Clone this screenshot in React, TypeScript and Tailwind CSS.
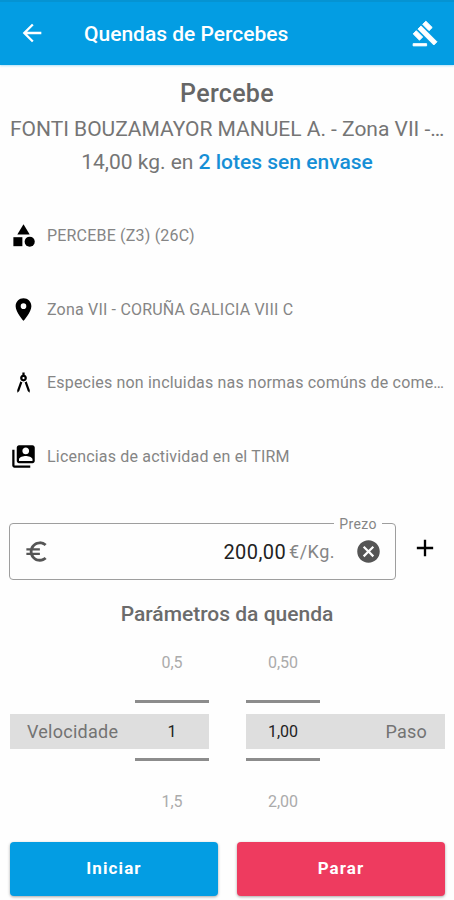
import type { ReactNode } from 'react';
import {
  MdAdd,
  MdArchitecture,
  MdArrowBack,
  MdCancel,
  MdCategory,
  MdEuroSymbol,
  MdPlace,
  MdSwitchAccount,
} from 'react-icons/md';

function GavelIcon() {
  return (
    <svg className="h-[27px] w-[27px]" viewBox="0 0 24 24" fill="currentColor" stroke="currentColor" strokeWidth={0.8}>
      <path d="M1 21h12v2H1z" />
      <path d="M5.245 8.07l2.83-2.827 14.14 14.142-2.828 2.828z" />
      <path d="M12.317 1l5.657 5.656-2.83 2.83-5.654-5.66z" />
      <path d="M3.825 9.485l5.657 5.657-2.828 2.828-5.657-5.657z" />
    </svg>
  );
}

interface InfoRowProps {
  icon: ReactNode;
  text: string;
}

function InfoRow({ icon, text }: InfoRowProps) {
  return (
    <li className="flex h-[73.8px] items-center">
      <span className="flex w-[37px] flex-shrink-0 text-black">{icon}</span>
      <span className="pt-px text-[16px] tracking-[0.19px] whitespace-nowrap text-[#858585]">{text}</span>
    </li>
  );
}

interface StepPickerProps {
  label: string;
  values: [string, string, string];
  reverse?: boolean;
}

function StepPicker({ label, values, reverse }: StepPickerProps) {
  const [prev, current, next] = values;

  return (
    <div className={`flex w-[199px] flex-col ${reverse ? 'items-start' : 'items-end'}`}>
      <div className="flex h-[60px] w-[74px] justify-center pt-3 text-[16px] leading-[22px] text-[#ababab]">{prev}</div>
      <div className="h-[3px] w-[74px] bg-[#8c8c8c]" />
      <div className={`mt-[11px] mb-[9px] flex h-[35px] w-full items-center bg-[#dedede] ${reverse ? 'flex-row-reverse' : ''}`}>
        <span className={`flex-1 text-[18px] tracking-[0.25px] text-[#737373] ${reverse ? 'pr-[18px] text-right' : 'pl-[17px]'}`}>
          {label}
        </span>
        <span className="w-[74px] pt-px text-center text-[16px] text-[#222222]">{current}</span>
      </div>
      <div className="h-[3px] w-[74px] bg-[#8c8c8c]" />
      <div className="flex h-[81px] w-[74px] justify-center pt-[30px] text-[16px] leading-[22px] text-[#ababab]">{next}</div>
    </div>
  );
}

export default function App() {
  return (
    <div className="flex h-[900px] w-[454px] flex-col overflow-hidden bg-[#fefefe] font-['Roboto',sans-serif]">
      <header className="flex h-[65px] flex-shrink-0 items-center border-t-2 border-[#0593d2] bg-[#039de3] pr-[15px] pl-[18px] text-white shadow-[0_1px_2px_rgba(3,157,227,0.3)]">
        <MdArrowBack className="-mt-[2px] h-7 w-7" />
        <h1 className="ml-[38px] flex-1 pt-[3px] text-[21px] font-medium">Quendas de Percebes</h1>
        <GavelIcon />
      </header>

      <section className="px-[10px] pt-[11px] text-center text-[21px] text-[#757575]">
        <h2 className="text-[25px] leading-[36px] font-medium tracking-[0.3px] text-[#666666]">Percebe</h2>
        <p className="pt-px leading-[33px] tracking-[-0.02px] whitespace-nowrap">FONTI BOUZAMAYOR MANUEL A. - Zona VII -…</p>
        <p className="leading-[32px]">
          14,00 kg. en <span className="font-medium text-[#168fd6]">2 lotes sen envase</span>
        </p>
      </section>

      <ul className="mt-[20.5px] px-[10px]">
        <InfoRow icon={<MdCategory className="h-[27px] w-[27px]" />} text="PERCEBE (Z3) (26C)" />
        <InfoRow icon={<MdPlace className="h-[27px] w-[27px]" />} text="Zona VII - CORUÑA GALICIA VIII C" />
        <InfoRow
          icon={<MdArchitecture className="h-[27px] w-[27px]" />}
          text="Especies non incluidas nas normas comúns de come…"
        />
        <InfoRow icon={<MdSwitchAccount className="h-[27px] w-[27px]" />} text="Licencias de actividad en el TIRM" />
      </ul>

      <div className="mt-[21.5px] flex h-[65px] items-start pl-[9px]">
        <fieldset className="h-[65px] w-[387px] rounded-[4px] border border-[#9e9e9e] pr-[13px] pl-[13px]">
          <legend className="ml-auto px-[5px] pt-px text-[14px] leading-4 tracking-[0.4px] text-[#858585]">Prezo</legend>
          <div className="flex h-[39px] items-center">
            <MdEuroSymbol className="h-[27px] w-[27px] text-[#555555]" />
            <span className="flex-1 text-right text-[20px] tracking-[0.4px] text-[#222222]">200,00</span>
            <span className="ml-[3px] text-[18px] tracking-[0.5px] text-[#858585]">€/Kg.</span>
            <MdCancel className="ml-5 h-[27px] w-[27px] text-[#555555]" />
          </div>
        </fieldset>
        <MdAdd className="mt-[19px] ml-[15px] h-[28px] w-[28px] text-black" />
      </div>

      <h3 className="mt-[17px] text-center text-[21px] leading-[34px] font-medium text-[#6b6b6b]">Parámetros da quenda</h3>

      <div className="mt-[9px] flex justify-between pr-[9px] pl-[10px]">
        <StepPicker label="Velocidade" values={['0,5', '1', '1,5']} />
        <StepPicker label="Paso" values={['0,50', '1,00', '2,00']} reverse />
      </div>

      <div className="flex gap-[19px] pr-[9px] pl-[10px]">
        <button className="h-[54px] flex-1 rounded-[4px] bg-[#039de3] text-[17px] font-bold tracking-[1.1px] text-white shadow-[0_1px_3px_rgba(0,0,0,0.35)]">
          Iniciar
        </button>
        <button className="h-[54px] flex-1 rounded-[4px] bg-[#ee3b5f] text-[17px] font-bold tracking-[1.1px] text-white shadow-[0_1px_3px_rgba(0,0,0,0.35)]">
          Parar
        </button>
      </div>
    </div>
  );
}
